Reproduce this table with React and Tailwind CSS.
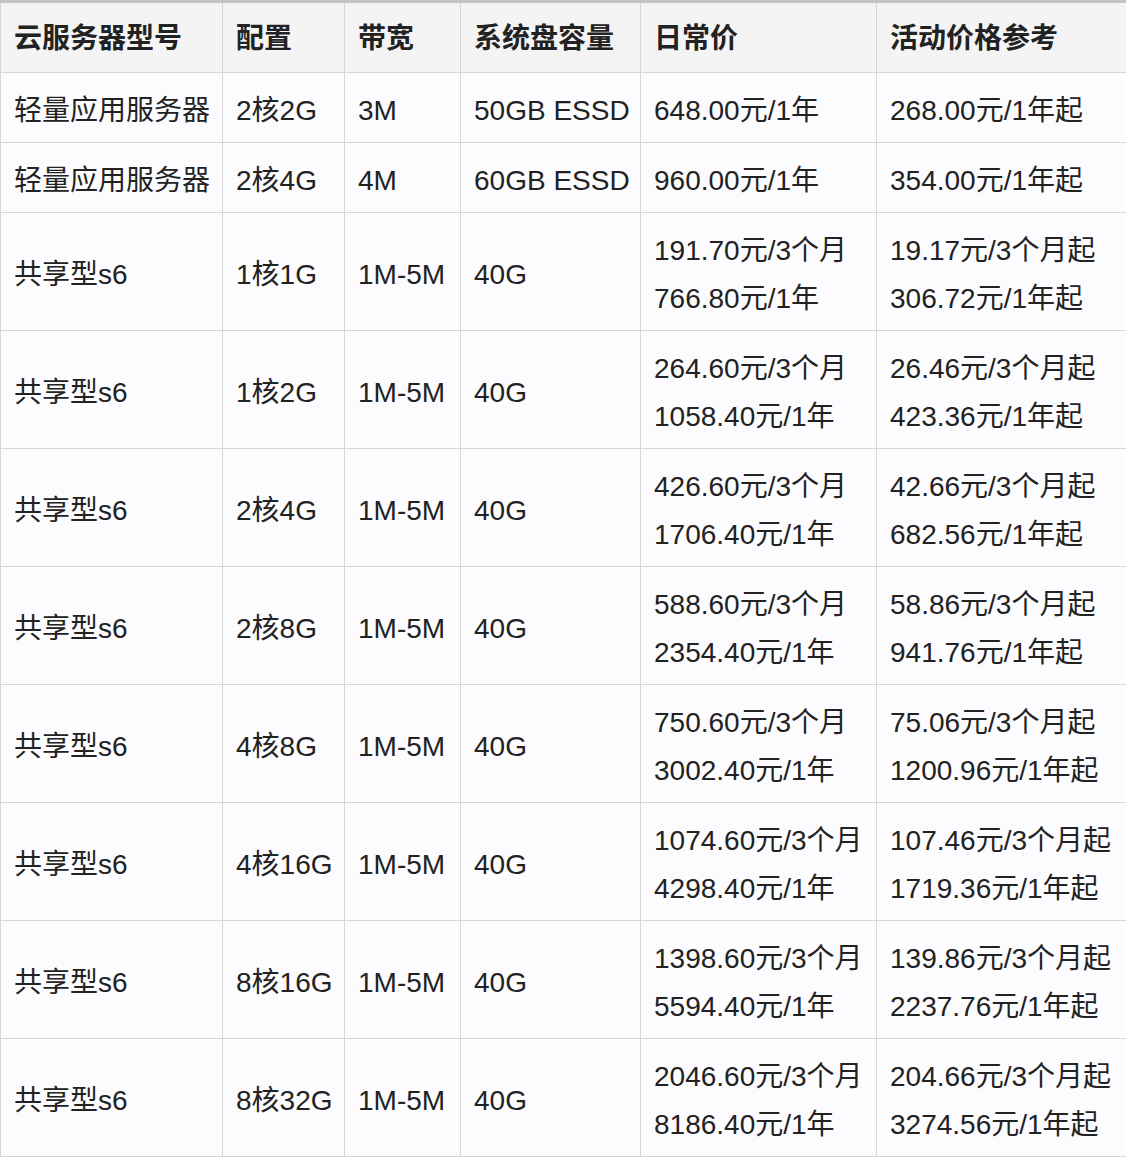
import React from 'react';

const rows = [
  ['轻量应用服务器', '2核2G', '3M', '50GB ESSD', ['648.00元/1年'], ['268.00元/1年起']],
  ['轻量应用服务器', '2核4G', '4M', '60GB ESSD', ['960.00元/1年'], ['354.00元/1年起']],
  ['共享型s6', '1核1G', '1M-5M', '40G', ['191.70元/3个月', '766.80元/1年'], ['19.17元/3个月起', '306.72元/1年起']],
  ['共享型s6', '1核2G', '1M-5M', '40G', ['264.60元/3个月', '1058.40元/1年'], ['26.46元/3个月起', '423.36元/1年起']],
  ['共享型s6', '2核4G', '1M-5M', '40G', ['426.60元/3个月', '1706.40元/1年'], ['42.66元/3个月起', '682.56元/1年起']],
  ['共享型s6', '2核8G', '1M-5M', '40G', ['588.60元/3个月', '2354.40元/1年'], ['58.86元/3个月起', '941.76元/1年起']],
  ['共享型s6', '4核8G', '1M-5M', '40G', ['750.60元/3个月', '3002.40元/1年'], ['75.06元/3个月起', '1200.96元/1年起']],
  ['共享型s6', '4核16G', '1M-5M', '40G', ['1074.60元/3个月', '4298.40元/1年'], ['107.46元/3个月起', '1719.36元/1年起']],
  ['共享型s6', '8核16G', '1M-5M', '40G', ['1398.60元/3个月', '5594.40元/1年'], ['139.86元/3个月起', '2237.76元/1年起']],
  ['共享型s6', '8核32G', '1M-5M', '40G', ['2046.60元/3个月', '8186.40元/1年'], ['204.66元/3个月起', '3274.56元/1年起']],
];

const headers = ['云服务器型号', '配置', '带宽', '系统盘容量', '日常价', '活动价格参考'];
const widths = ['w-[222px]', 'w-[122px]', 'w-[116px]', 'w-[180px]', 'w-[236px]', 'w-[250px]'];

export default function App() {
  return (
    <div className="w-[1126px] h-[1162px] bg-white overflow-hidden font-['Liberation_Sans','Noto_Sans_CJK_SC',sans-serif] text-[#222] text-[28px]">
      <table className="table-fixed border-collapse w-[1126px] border-t-[3px] border-t-[#c4c4c4]">
        <colgroup>
          {widths.map((w, i) => <col key={i} className={w} />)}
        </colgroup>
        <thead>
          <tr className="h-[71px] bg-[#f4f4f5]">
            {headers.map((h, i) => (
              <th key={i} className="border border-[#d6d6da] pl-[13px] pr-0 pt-[3px] text-left font-bold align-middle whitespace-nowrap">{h}</th>
            ))}
          </tr>
        </thead>
        <tbody className="bg-[#fcfcfe]">
          {rows.map((r, i) => (
            <tr key={i} className={r[4].length > 1 ? 'h-[118px]' : 'h-[70px]'}>
              {r.slice(0, 4).map((c, j) => (
                <td key={j} className="border border-[#d6d6da] pl-[13px] pr-0 pt-[7px] align-middle whitespace-nowrap">{c}</td>
              ))}
              {r.slice(4).map((c, j) => (
                <td key={j} className="border border-[#d6d6da] pl-[13px] pr-0 pt-[7px] align-middle leading-[48px] whitespace-nowrap">
                  {c.map((t, k) => <div key={k}>{t}</div>)}
                </td>
              ))}
            </tr>
          ))}
        </tbody>
      </table>
    </div>
  );
}
